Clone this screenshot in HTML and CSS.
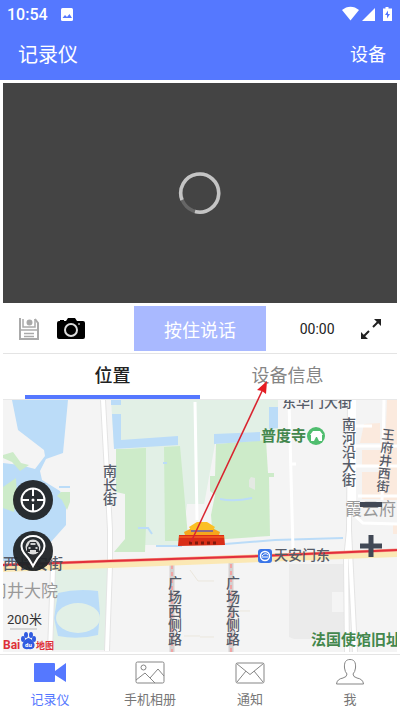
FILE: index.html
```html
<!DOCTYPE html>
<html lang="zh-CN">
<head>
    <meta charset="UTF-8">
    <meta name="viewport" content="width=device-width, initial-scale=1.0">
    <title>记录仪</title>
    <link rel="stylesheet" href="styles.css">
</head>
<body>
    <header class="header">
        <div class="status-bar">
            <span class="clock">10:54</span>
            <svg class="status-photo" width="14" height="14" viewBox="0 0 14 14">
                <rect x="1" y="1" width="12" height="13" rx="1.5" fill="#fff"/>
                <path d="M2.5 11 5 8l2 2 2.500-3 2.500 4z" fill="#5578ff"/>
            </svg>
            <svg class="status-icons" width="51" height="16" viewBox="0 0 51 16">
                <path d="M0 4C5-.5 12-.5 17 4L8.500 14.500z" fill="#fff"/>
                <path d="M33 2v13H20z" fill="#fff"/>
                <path d="M43.500 1h3v1.500H50V15h-9V2.500h2.500z" fill="#fff"/>
                <path d="M46 4.500 43 9h2v3.500L48 8h-2z" fill="#5578ff"/>
            </svg>
        </div>
        <div class="title-bar">
            <h1>记录仪</h1>
            <a class="device-link" href="#device">设备</a>
        </div>
    </header>

    <main class="content">
        <div class="video">
            <svg width="44" height="44" viewBox="0 0 44 44" fill="none" stroke-width="3.500">
                <circle cx="22" cy="22" r="19" stroke="#666"/>
                <path d="M4 29A19 19 0 1 1 17 40.500" stroke="#c4c4c4"/>
            </svg>
        </div>

        <div class="toolbar">
            <div class="tools">
                <button class="icon-btn" aria-label="保存">
                    <svg width="20" height="22" viewBox="0 0 20 22" fill="none" stroke="#aaa" stroke-width="2">
                        <path d="M1 0v21h18V5l-3-4"/>
                        <path d="M4 1v8h12V1" stroke-width="1.500"/>
                        <path d="M1 12h18M5 15.500h10M5 18.500h10" stroke-width="1.500"/>
                        <circle cx="10.500" cy="4.500" r="2" fill="#aaa"/>
                    </svg>
                </button>
                <button class="icon-btn" aria-label="拍照">
                    <svg width="28" height="21" viewBox="0 0 28 21">
                        <path d="M0 5q0-2 2-2h7l2-3h7l2 3h6q2 0 2 2v14q0 2-2 2H2q-2 0-2-2z" fill="#000"/>
                        <path d="M3 2h4v1H3z" fill="#000"/>
                        <circle cx="14" cy="12" r="6" fill="none" stroke="#ddd" stroke-width="2"/>
                        <circle cx="22" cy="6" r="1" fill="#aaa"/>
                    </svg>
                </button>
            </div>
            <button class="talk-btn">按住说话</button>
            <div class="record">
                <span>00:00</span>
                <button class="icon-btn" aria-label="全屏">
                    <svg width="22" height="22" viewBox="0 0 22 22" fill="none" stroke="#222" stroke-width="2">
                        <path d="m13 9 7-7M9 13l-7 7"/>
                        <path d="M14 1h7v7zM1 14v7h7z" fill="#222" stroke="none"/>
                    </svg>
                </button>
            </div>
        </div>

        <section class="panel">
            <div class="tabs">
                <button class="tab active">位置</button>
                <button class="tab">设备信息</button>
            </div>

            <div class="map">
                <svg class="map-canvas" viewBox="3 400 394 252" preserveAspectRatio="xMidYMid slice">
                    <rect x="3" y="400" width="394" height="252" fill="#f4f4f4"/>
                    <!-- palace grounds and parks -->
                    <path d="M111 400h167v32l-12 9-51 3-11 61h-17l-6 40h-37l-2-96-28-3z" fill="#e2f0e6"/>
                    <path d="M187 504h17l2 38h-17z" fill="#f4f4f4"/>
                    <path d="M116 449l30-1v78l-1 26h-31l11-13v-45l-9-2z" fill="#cdebc9"/>
                    <path d="M164 447l16-1 4 45 4 46-1 4h-22z" fill="#cdebc9"/>
                    <path d="M216 444l50-4 2 33h6v4h-5l1 59-57 4-2-25 4-20-5-4v-15h5z" fill="#cdebc9"/>
                    <path d="m251 477 4 1v12l-6-3v-7z" fill="#e4e9e3"/>
                    <path d="m53 569 54-3v84H49z" fill="#e2f0e6"/>
                    <!-- lakes and moats -->
                    <path d="M12 400h56l-5 53-17 6-6 12 2 9 18 11 6 14v20l-16 18-30 18H3v-98l17 2 15 4 10-13-1-6-26-20-3-15z" fill="#bbdcf8"/>
                    <path d="M3 455l10-3 8 11 8 2-9 6-8-9-9-4zM3 487l13-9 1 20-3 14-11-4z" fill="#cdebc9"/>
                    <path d="M61 492h9v10l-3 8-5-10-5-4z" fill="#cdebc9"/>
                    <path d="M59 487h11" stroke="#bbdcf8" stroke-width="2"/>
                    <path d="M111 400h10v5h-10zM112 414h9v26l57-4v9l-64 4zM214 434l46-2v9l-46 3zM269 407h9v21l-9 1z" fill="#bbdcf8"/>
                    <path d="M156 546h26M225 544l50-4 68-2" stroke="#bbdcf8" stroke-width="2" fill="none"/>
                    <path d="M138 528h10l4 6M163 463h4M220 499q14 3 32-1" stroke="#bbdcf8" stroke-width="2" fill="none"/>
                    <path d="M58 593q19-5 40-2l2 23-2 21q-20 5-40 1l-4-18z" fill="#bbdcf8"/>
                    <ellipse cx="78" cy="618" rx="22" ry="15" fill="#e2f0e6"/>
                    <!-- blocks -->
                    <path d="M289 564h55v75h-50l-5-2z" fill="#ebebeb"/>
                    <path d="M332 592h12v20h-12z" fill="#f4f4f4"/>
                    <path d="M387 400h10v100h-14zM364 424l16-1v20h-20zM362 450h20v15h-20zM362 472h22v27h-22zM393 524h4v10h-4z" fill="#fbeade"/>
                    <!-- small roads -->
                    <path d="M103 400l3 55 4 75v36l-3 85M53 569l-3 82M350 400l-1 130-3 30 1 92M349 530l6 122" stroke="#e4e4e4" stroke-width="6" fill="none"/>
                    <path d="M103 400l3 55 4 75v36l-3 85M53 569l-3 82M350 400l-1 130-3 30 1 92M349 530l6 122" stroke="#fff" stroke-width="4" fill="none"/>
                    <path d="M352 400v110" stroke="#fff" stroke-width="8"/>
                    <path d="M195 402l2 118M289 400l4 150M291 464h5M350 426h22M350 446h47M350 466h47M384 400l-2 100M358 496h39M354 515l9 8 34 1" stroke="#fff" stroke-width="3" fill="none"/>
                    <path d="M172 565v90M231 557v96" stroke="#d5d0d0" stroke-width="5"/>
                    <path d="M172 565v90M231 557v96" stroke="#f0a5a5" stroke-width="2" stroke-dasharray="4 3"/>
                    <path d="M190 570l8 11h16M200 637h14M184 636h16M238 611h12" stroke="#ebe7dd" fill="none"/>
                    <!-- main avenue -->
                    <path d="M3 568 110 564 260 558 397 553" stroke="#fbe8b4" stroke-width="8" fill="none"/>
                    <path d="M3 565 110 561 260 556 397 550" stroke="#f5a08c" stroke-width="3" fill="none"/>
                    <path d="M3 565 110 561 260 556 397 550" stroke="#e32f3b" stroke-width="2" fill="none"/>
                    <!-- gate tower -->
                    <path d="M179 535h45l1 10-47 1z" fill="#d92e17"/>
                    <path d="M184 532l8-4h20l8 4-1 3h-34z" fill="#f6a61c"/>
                    <path d="M191 529h22v3h-22z" fill="#8a6a8c"/>
                    <path d="M189 527l8-5h10l8 5-2 3h-22z" fill="#fbbf24"/>
                    <path d="M179 537h45" stroke="#f0521e" stroke-width="2"/>
                    <path d="M189 543h28" stroke="#7f180c" stroke-width="3" stroke-dasharray="3 3"/>
                    <!-- street names -->
                    <g class="street">
                        <text class="vertical" x="109" y="464">南长街</text>
                        <text class="vertical" x="348" y="417">南河沿大街</text>
                        <text class="vertical narrow" x="388" y="428" transform="rotate(6 388 428)">王府井西街</text>
                        <text class="vertical" x="174" y="576">广场西侧路</text>
                        <text class="vertical" x="232" y="576">广场东侧路</text>
                        <text x="282" y="407">东华门大街</text>
                        <text class="wide" x="3" y="569">西长安街</text>
                        <text x="274" y="560">天安门东</text>
                    </g>
                    <g class="area">
                        <text x="-10" y="597">司井大院</text>
                        <text x="345" y="515">霞云府</text>
                    </g>
                    <g class="sight">
                        <text x="261" y="441">普度寺</text>
                        <text x="311" y="645">法国使馆旧址</text>
                    </g>
                    <circle cx="316" cy="436" r="9" fill="#4fbd6e"/>
                    <path d="M310 435l3-4h7l3 4h-1v6h-3l-2-4h-1l-2 4h-3v-6z" fill="#fff"/>
                    <rect x="258" y="549" width="14" height="14" rx="3" fill="#3b76e8"/>
                    <circle cx="265" cy="556" r="4.500" fill="none" stroke="#fff" stroke-width="1.500"/>
                    <path d="M262 556q3-4 6-1M262 557h6" fill="none" stroke="#fff"/>
                    <!-- scale and map brand -->
                    <text class="scale" x="7" y="624">200米</text>
                    <path d="M10 629h27" stroke="#bbb"/>
                    <text class="brand" x="3" y="649">Bai</text>
                    <g fill="#315be0">
                        <ellipse cx="23" cy="639" rx="2" ry="3"/>
                        <ellipse cx="26" cy="635" rx="2" ry="3"/>
                        <ellipse cx="31" cy="635" rx="2" ry="3"/>
                        <ellipse cx="34" cy="639" rx="2" ry="3"/>
                        <path d="M28.500 638q4 1 6 6 1 6-6 5-7 1-6-5 2-5 6-6z"/>
                    </g>
                    <text class="brand-du" x="25" y="647">du</text>
                    <text class="brand brand-map" x="36" y="649">地图</text>
                </svg>

                <div class="map-tools">
                    <button class="round-btn" aria-label="定位">
                        <svg width="26" height="26" viewBox="0 0 26 26" fill="none" stroke="#fff" stroke-width="2">
                            <circle cx="13" cy="13" r="11.500"/>
                            <path d="M13 2v7M13 17v7M2 13h7M17 13h7"/>
                            <circle cx="13" cy="13" r="1.500" fill="#fff" stroke="none"/>
                        </svg>
                    </button>
                    <button class="round-btn" aria-label="车辆位置">
                        <svg width="26" height="34" viewBox="0 0 26 34" fill="none" stroke="#fff" stroke-width="2">
                            <path d="M13 32Q9 24 4 19C-2 10 4 2 13 2s15 8 9 17Q17 24 13 32z"/>
                            <circle cx="13" cy="13" r="7.500" fill="#ddd" stroke="none"/>
                            <path d="M8 12l2-4h6l2 4 1 1v5h-3v-2h-6v2H7v-5z" fill="#292c30" stroke="none"/>
                            <path d="M10.500 10h5M8.500 14h2M15.500 14h2" stroke="#fff" stroke-width="1.500"/>
                        </svg>
                    </button>
                </div>
                <div class="zoom-tools">
                    <button class="icon-btn" aria-label="缩小">
                        <svg width="22" height="22" viewBox="0 0 22 22"><path d="M0 10.500h22" stroke="#414855" stroke-width="5"/></svg>
                    </button>
                    <button class="icon-btn" aria-label="放大">
                        <svg width="22" height="22" viewBox="0 0 22 22"><path d="M0 11h22M11 0v22" stroke="#414855" stroke-width="5"/></svg>
                    </button>
                </div>
            </div>

            <svg class="pointer" viewBox="3 354 394 298" preserveAspectRatio="xMidYMid slice">
                <path d="M191 542 263 389" stroke="#d9232e" stroke-width="1.500"/>
                <path d="M267 381l-1 13-4-3-5-1z" fill="#e51c23"/>
            </svg>
        </section>
    </main>

    <nav class="bottom-nav">
        <a class="nav-item active" href="#recorder">
            <svg width="34" height="24" viewBox="0 0 34 24" fill="#5578ff">
                <rect x="1" y="2" width="21" height="19" rx="1"/>
                <path d="M22 10 33 2v19l-11-7z"/>
            </svg>
            <span>记录仪</span>
        </a>
        <a class="nav-item" href="#album">
            <svg width="30" height="24" viewBox="0 0 30 24" fill="none" stroke="#858585">
                <rect x="1" y="1" width="28" height="21" rx="1.500"/>
                <circle cx="8.500" cy="6.500" r="2.500"/>
                <path d="m1 19 9-7 10 10M15 17l8-9 6 7"/>
            </svg>
            <span>手机相册</span>
        </a>
        <a class="nav-item" href="#notice">
            <svg width="30" height="24" viewBox="0 0 30 24" fill="none" stroke="#858585">
                <rect x="1" y="2" width="28" height="20" rx="1.500"/>
                <path d="m1.500 2.500 13.500 11 13.500-11M2 21l9-11M28 21l-9-11"/>
            </svg>
            <span>通知</span>
        </a>
        <a class="nav-item" href="#me">
            <svg width="30" height="26" viewBox="0 0 30 26" fill="none" stroke="#858585">
                <path d="M12 15q-2-2-2.500-6C9 3 11 .500 15 .500S21 3 20.500 9q-.5 4-2.500 6 0 3 4 4 6 1 6.500 6h-27Q2 20 8 19q4-1 4-4z"/>
            </svg>
            <span>我</span>
        </a>
    </nav>
</body>
</html>
```

FILE: styles.css
```css
* { margin: 0; padding: 0; box-sizing: border-box; }
body {
    min-height: 100vh;
    display: flex;
    flex-direction: column;
    background: #fff;
    font-family: Roboto, "Noto Sans CJK SC", sans-serif;
}
button {
    border: none;
    background: none;
    font-family: inherit;
    cursor: pointer;
}
a { text-decoration: none; }
svg { display: block; }

.header { background: #5578ff; color: #fff; }
.status-bar {
    display: flex;
    align-items: center;
    height: 28px;
    padding: 0 7px;
}
.clock { font-size: 16px; font-weight: 500; }
.status-photo { margin-left: 12px; }
.status-icons { margin-left: auto; }
.title-bar {
    display: flex;
    align-items: center;
    justify-content: space-between;
    height: 52px;
    padding: 0 14px 2px 18px;
}
.title-bar h1 { font-size: 20px; font-weight: 400; }
.device-link { color: #fff; font-size: 18px; }

.content { padding: 3px 3px 0; }
.video {
    display: flex;
    align-items: center;
    justify-content: center;
    height: 220px;
    background: #444;
}
.toolbar {
    display: grid;
    grid-template-columns: 1fr 1fr 1fr;
    height: 51px;
    padding: 3px 0 2px;
    border-bottom: 1px solid #e4e4e4;
}
.tools { display: flex; align-items: center; gap: 18px; padding-left: 16px; }
.record {
    display: flex;
    align-items: center;
    justify-content: space-between;
    padding: 0 15px 0 34px;
    font-size: 14px;
    color: #222;
}
.talk-btn { background: #a9b9ff; color: #fff; font-size: 18px; }

.panel { position: relative; }
.tabs { display: flex; height: 46px; padding: 0 22px; border-bottom: 1px solid #e8e8e8; }
.tab {
    flex: 1;
    padding-bottom: 2px;
    border-bottom: 4px solid transparent;
    font-size: 18px;
    color: #858585;
}
.tab.active { color: #222; border-color: #5578ff; font-weight: 500; }

.map { position: relative; overflow: hidden; }
.map-canvas { width: 100%; }
.street { font-size: 14px; font-weight: 500; fill: #555b68; }
.area { font-size: 17px; fill: #999; }
.sight { font-size: 15px; font-weight: 700; fill: #43874d; }
.vertical { writing-mode: vertical-rl; }
.narrow { font-size: 13px; }
.wide { font-size: 15px; }
.scale { font-size: 13px; fill: #333; }
.brand { font-size: 12px; font-weight: 700; fill: #de3038; }
.brand-map { font-size: 9px; }
.brand-du { font-size: 6px; font-weight: 700; fill: #fff; }
.map-tools {
    position: absolute;
    top: 80px;
    left: 10px;
    display: flex;
    flex-direction: column;
    gap: 11px;
}
.round-btn {
    display: flex;
    align-items: center;
    justify-content: center;
    width: 40px;
    height: 40px;
    border-radius: 50%;
    background: rgba(32, 35, 38, 0.95);
}
.zoom-tools {
    position: absolute;
    top: 94px;
    right: 15px;
    display: flex;
    flex-direction: column;
    gap: 19px;
}
.pointer {
    position: absolute;
    top: 0;
    left: 0;
    width: 100%;
    height: 100%;
    pointer-events: none;
}

.bottom-nav {
    display: flex;
    margin-top: auto;
    border-top: 1px solid #e4e4e4;
}
.nav-item {
    flex: 1;
    display: flex;
    flex-direction: column;
    align-items: center;
    justify-content: flex-end;
    height: 54px;
    gap: 6px;
    font-size: 13px;
    line-height: 18px;
    color: #777;
}
.nav-item.active { color: #5578ff; }
```
